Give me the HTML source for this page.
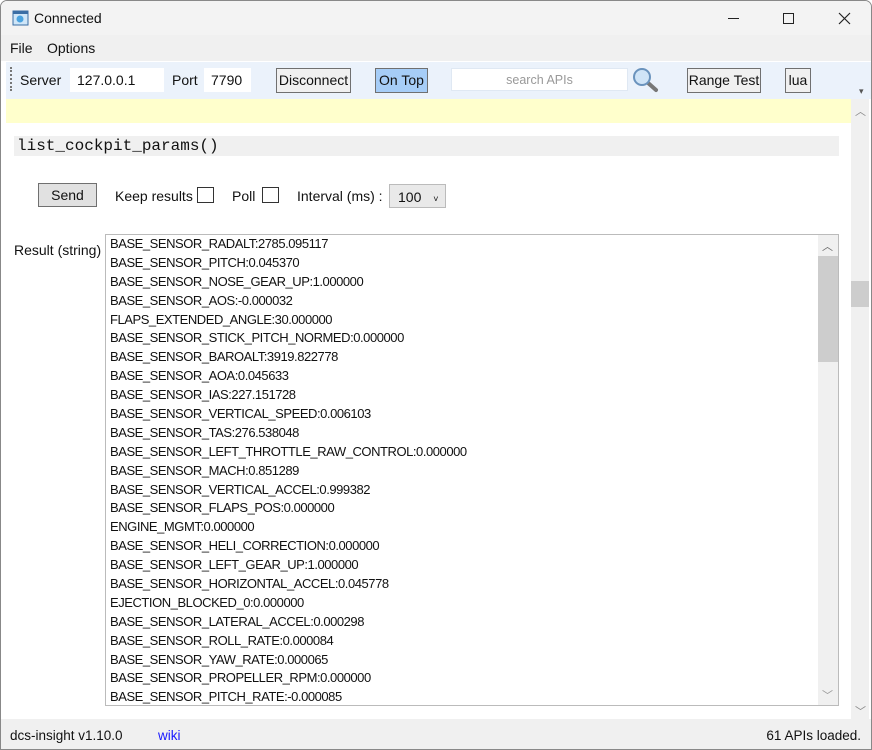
<!DOCTYPE html>
<html><head><meta charset="utf-8"><style>
*{margin:0;padding:0;box-sizing:border-box}
body{width:872px;height:750px;overflow:hidden;background:#fff;font-family:"Liberation Sans",sans-serif;font-size:14px;color:#111;position:relative}
.a{position:absolute}
.win{left:0;top:0;width:872px;height:750px;border:1px solid #888;border-radius:7px 7px 0 0;overflow:hidden;background:#fff}
.btn{position:absolute;border:1px solid #707070;background:#e6e6e6;font-size:14px;text-align:center;line-height:21px}
.inp{position:absolute;background:#fff;font-size:14px;line-height:24px;padding-left:7px}
.res div{height:18.9px;line-height:18.9px;font-size:13px;letter-spacing:-0.45px;white-space:nowrap}
</style></head><body>
<div class="a win">
<div class="a" style="left:0;top:0;width:872px;height:34px;background:#f3f3f3"></div>
<svg class="a" style="left:11px;top:9px" width="17" height="17"><rect x="1" y="1" width="15" height="14" fill="#cfe6f8" stroke="#3a6ea5"/><rect x="1" y="1" width="15" height="3" fill="#3a6ea5"/><circle cx="8" cy="9" r="3.5" fill="#4aa3e0"/></svg>
<div class="a" style="left:33px;top:9px;font-size:14px">Connected</div>
<div class="a" style="left:727px;top:17px;width:11px;height:1px;background:#222"></div>
<div class="a" style="left:782px;top:12px;width:11px;height:11px;border:1px solid #222"></div>
<svg class="a" style="left:837px;top:11px" width="13" height="13"><path d="M1 1L12 12M12 1L1 12" stroke="#222" stroke-width="1.2"/></svg>
<div class="a" style="left:0;top:34px;width:872px;height:26px;background:#f0f0f0"></div>
<div class="a" style="left:9px;top:39px">File</div>
<div class="a" style="left:46px;top:39px">Options</div>
<div class="a" style="left:5px;top:60px;width:866px;height:38px;background:#ebf2fb;border-top:1px solid #fff"></div>
<div class="a" style="left:9px;top:66px;width:2px;height:24px;border-left:2px dotted #777"></div>
<div class="a" style="left:19px;top:71px">Server</div>
<div class="inp" style="left:69px;top:67px;width:94px">127.0.0.1</div>
<div class="a" style="left:171px;top:71px">Port</div>
<div class="inp" style="left:203px;top:67px;width:47px">7790</div>
<div class="btn" style="left:275px;top:67px;width:75px;height:25px;line-height:23px;background:#f0f0f0">Disconnect</div>
<div class="btn" style="left:374px;top:67px;width:53px;height:25px;line-height:23px;background:#a6cdf7">On Top</div>
<div class="inp" style="left:450px;top:67px;width:177px;height:23px;line-height:22px;border:1px solid #dfe8f3;color:#999;font-size:12.5px;text-align:center;padding:0">search APIs</div>
<svg class="a" style="left:631px;top:66px" width="28" height="26"><line x1="15" y1="15" x2="24" y2="23" stroke="#777" stroke-width="4" stroke-linecap="round"/><circle cx="10" cy="10" r="8" fill="#cfe4f7" stroke="#6a93bd" stroke-width="2"/></svg>
<div class="btn" style="left:686px;top:67px;width:74px;height:25px;line-height:23px;background:#f0f0f0">Range Test</div>
<div class="btn" style="left:784px;top:67px;width:26px;height:25px;line-height:23px;background:#f0f0f0">lua</div>
<div class="a" style="left:858px;top:85px;font-size:9px;color:#555">▾</div>
<div class="a" style="left:5px;top:98px;width:845px;height:24px;background:#ffffcc"></div>
<div class="a" style="left:850px;top:98px;width:18px;height:620px;background:#f0f0f0"></div>
<div class="a" style="left:850px;top:280px;width:18px;height:26px;background:#cdcdcd"></div>
<div class="a" style="left:854px;top:102px;font-size:11px;color:#888">︿</div>
<div class="a" style="left:854px;top:702px;font-size:11px;color:#888">﹀</div>
<div class="a" style="left:13px;top:135px;width:825px;height:20px;background:#f0f0f0;font-family:'Liberation Mono',monospace;font-size:16px;line-height:20px;padding-left:3px">list_cockpit_params()</div>
<div class="btn" style="left:37px;top:182px;width:59px;height:24px;line-height:22px;background:#e1e1e1">Send</div>
<div class="a" style="left:114px;top:187px">Keep results</div>
<div class="a" style="left:196px;top:186px;width:17px;height:16px;border:1px solid #333;background:#fff"></div>
<div class="a" style="left:231px;top:187px">Poll</div>
<div class="a" style="left:261px;top:186px;width:17px;height:16px;border:1px solid #333;background:#fff"></div>
<div class="a" style="left:296px;top:187px">Interval (ms) :</div>
<div class="a" style="left:388px;top:183px;width:57px;height:24px;border:1px solid #bbb;background:#e9e9e9;padding-left:8px;line-height:24px">100 <span style="font-size:9px;margin-left:8px">˅</span></div>
<div class="a" style="left:13px;top:241px">Result (string)</div>
<div class="a" style="left:104px;top:233px;width:734px;height:472px;border:1px solid #bbb;background:#fff;overflow:hidden">
<div class="a res" style="left:4px;top:0px">
<div>BASE_SENSOR_RADALT:2785.095117</div><div>BASE_SENSOR_PITCH:0.045370</div><div>BASE_SENSOR_NOSE_GEAR_UP:1.000000</div><div>BASE_SENSOR_AOS:-0.000032</div><div>FLAPS_EXTENDED_ANGLE:30.000000</div><div>BASE_SENSOR_STICK_PITCH_NORMED:0.000000</div><div>BASE_SENSOR_BAROALT:3919.822778</div><div>BASE_SENSOR_AOA:0.045633</div><div>BASE_SENSOR_IAS:227.151728</div><div>BASE_SENSOR_VERTICAL_SPEED:0.006103</div><div>BASE_SENSOR_TAS:276.538048</div><div>BASE_SENSOR_LEFT_THROTTLE_RAW_CONTROL:0.000000</div><div>BASE_SENSOR_MACH:0.851289</div><div>BASE_SENSOR_VERTICAL_ACCEL:0.999382</div><div>BASE_SENSOR_FLAPS_POS:0.000000</div><div>ENGINE_MGMT:0.000000</div><div>BASE_SENSOR_HELI_CORRECTION:0.000000</div><div>BASE_SENSOR_LEFT_GEAR_UP:1.000000</div><div>BASE_SENSOR_HORIZONTAL_ACCEL:0.045778</div><div>EJECTION_BLOCKED_0:0.000000</div><div>BASE_SENSOR_LATERAL_ACCEL:0.000298</div><div>BASE_SENSOR_ROLL_RATE:0.000084</div><div>BASE_SENSOR_YAW_RATE:0.000065</div><div>BASE_SENSOR_PROPELLER_RPM:0.000000</div><div>BASE_SENSOR_PITCH_RATE:-0.000085</div>
</div>
<div class="a" style="left:712px;top:0;width:20px;height:470px;background:#f0f0f0"></div>
<div class="a" style="left:712px;top:21px;width:20px;height:106px;background:#cdcdcd"></div>
<div class="a" style="left:716px;top:3px;font-size:11px;color:#666">︿</div>
<div class="a" style="left:716px;top:452px;font-size:11px;color:#999">﹀</div>
</div>
<div class="a" style="left:0;top:718px;width:872px;height:32px;background:#f0f0f0"></div>
<div class="a" style="left:9px;top:727px;font-size:13.5px">dcs-insight v1.10.0</div>
<div class="a" style="left:157px;top:727px;font-size:13.5px;color:#1a1aff">wiki</div>
<div class="a" style="right:10px;top:727px;font-size:13.5px">61 APIs loaded.</div>
</div>
</body></html>
